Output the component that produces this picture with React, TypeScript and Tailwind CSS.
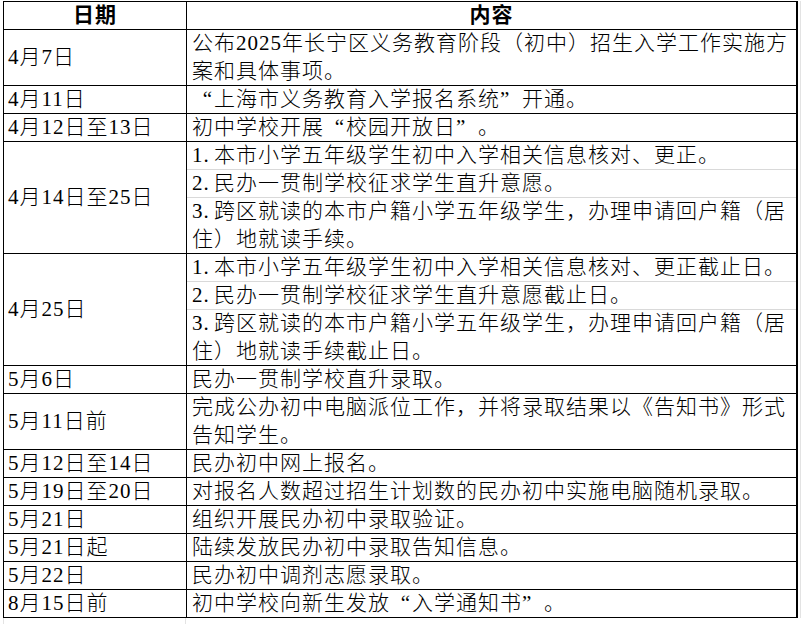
import React from 'react';

type Row = { date: string; cells: string[][] };

const rows: Row[] = [
  { date: '4月7日', cells: [['公布2025年长宁区义务教育阶段（初中）招生入学工作实施方', '案和具体事项。']] },
  { date: '4月11日', cells: [['“上海市义务教育入学报名系统”开通。']] },
  { date: '4月12日至13日', cells: [['初中学校开展“校园开放日”。']] },
  {
    date: '4月14日至25日',
    cells: [
      ['1.本市小学五年级学生初中入学相关信息核对、更正。'],
      ['2.民办一贯制学校征求学生直升意愿。'],
      ['3.跨区就读的本市户籍小学五年级学生，办理申请回户籍（居', '住）地就读手续。'],
    ],
  },
  {
    date: '4月25日',
    cells: [
      ['1.本市小学五年级学生初中入学相关信息核对、更正截止日。'],
      ['2.民办一贯制学校征求学生直升意愿截止日。'],
      ['3.跨区就读的本市户籍小学五年级学生，办理申请回户籍（居', '住）地就读手续截止日。'],
    ],
  },
  { date: '5月6日', cells: [['民办一贯制学校直升录取。']] },
  { date: '5月11日前', cells: [['完成公办初中电脑派位工作，并将录取结果以《告知书》形式', '告知学生。']] },
  { date: '5月12日至14日', cells: [['民办初中网上报名。']] },
  { date: '5月19日至20日', cells: [['对报名人数超过招生计划数的民办初中实施电脑随机录取。']] },
  { date: '5月21日', cells: [['组织开展民办初中录取验证。']] },
  { date: '5月21日起', cells: [['陆续发放民办初中录取告知信息。']] },
  { date: '5月22日', cells: [['民办初中调剂志愿录取。']] },
  { date: '8月15日前', cells: [['初中学校向新生发放“入学通知书”。']] },
];

// full-width quotes and "1." prefixes, the way the sheet's font lays them out
function Line({ text }: { text: string }) {
  const parts: React.ReactNode[] = [];
  let rest = text;
  const m = rest.match(/^(\d\.)/);
  if (m) {
    parts.push(
      <span key="n" className="inline-block w-[22px]">
        {m[1]}
      </span>
    );
    rest = rest.slice(2);
  }
  let buf = '';
  let k = 0;
  for (const ch of rest) {
    if (ch === '“' || ch === '”') {
      if (buf) parts.push(<span key={k++}>{buf}</span>);
      buf = '';
      parts.push(
        <span key={k++} className={`inline-block w-[22px] ${ch === '“' ? 'text-right pr-[1px]' : 'text-left'}`}>
          {ch}
        </span>
      );
    } else {
      buf += ch;
    }
  }
  if (buf) parts.push(<span key={k++}>{buf}</span>);
  return <div className="whitespace-nowrap leading-[27.5px]">{parts}</div>;
}

export default function App() {
  return (
    <div className="w-[801px] h-[624px] bg-white text-black text-[21px] font-light tracking-[1px] font-['Liberation_Serif','Noto_Sans_CJK_SC',serif] overflow-hidden">
      <div className="flex pt-[1px]">
        <div className="ml-[3px] w-[795px] border-t border-l border-r-2 border-black">
          <div className="flex h-[28px] border-b border-black font-bold">
            <div className="w-[183px] border-r border-black flex items-center justify-center leading-none">日期</div>
            <div className="flex-1 flex items-center justify-center leading-none">内容</div>
          </div>
          {rows.map((row) => {
            const lines = row.cells.reduce((n, c) => n + c.length, 0);
            return (
              <div
                key={row.date}
                className="flex border-b border-black"
                style={{ height: lines * 28 }}
              >
                <div className="w-[183px] shrink-0 border-r border-black flex items-center pl-[4px] whitespace-nowrap">
                  {row.date}
                </div>
                <div className="flex-1 flex flex-col overflow-hidden">
                  {row.cells.map((cell, i) => {
                    const last = i === row.cells.length - 1;
                    return (
                      <div
                        key={i}
                        className={`pl-[5px] flex flex-col justify-center ${last ? 'flex-1' : 'border-b border-[#d9d9d9]'}`}
                        style={last ? undefined : { height: cell.length * 28 }}
                      >
                        {cell.map((t, j) => (
                          <Line key={j} text={t} />
                        ))}
                      </div>
                    );
                  })}
                </div>
              </div>
            );
          })}
        </div>
        <div className="w-[3px] border-r border-[#e3e3e3]" />
      </div>
      <div className="ml-[3px] h-[8px] w-[183px] border-l border-r border-[#e3e3e3]" />
    </div>
  );
}
